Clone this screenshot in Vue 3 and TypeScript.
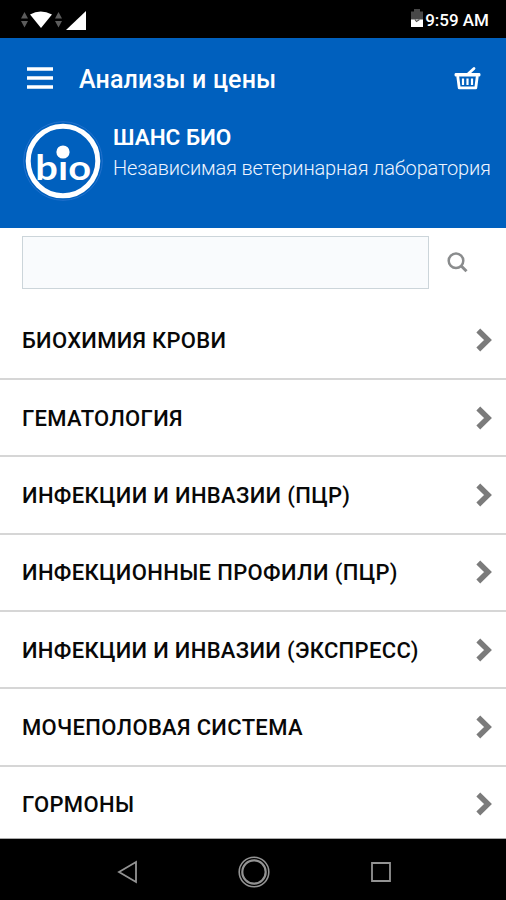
<script setup lang="ts">
interface Category {
  id: number
  title: string
  width: number
}

const categories: Category[] = [
  { id: 1, title: 'БИОХИМИЯ КРОВИ', width: 204 },
  { id: 2, title: 'ГЕМАТОЛОГИЯ', width: 160.5 },
  { id: 3, title: 'ИНФЕКЦИИ И ИНВАЗИИ (ПЦР)', width: 328 },
  { id: 4, title: 'ИНФЕКЦИОННЫЕ ПРОФИЛИ (ПЦР)', width: 375.5 },
  { id: 5, title: 'ИНФЕКЦИИ И ИНВАЗИИ (ЭКСПРЕСС)', width: 396.5 },
  { id: 6, title: 'МОЧЕПОЛОВАЯ СИСТЕМА', width: 280.5 },
  { id: 7, title: 'ГОРМОНЫ', width: 112 },
]
</script>

<template>
  <div class="screen">
    <div class="status">
      <svg class="signals" width="68" height="22" viewBox="0 0 68 22">
        <g fill="#5c5c5c">
          <path d="M1 9.5 4.500 3 8 9.500zM1 12 4.500 18.500 8 12z" />
          <path d="M35 9.500 38.500 3 42 9.500zM35 12 38.500 18.500 42 12z" />
        </g>
        <path d="M10 5.500Q20.500-.500 32 5.500L21 19z" fill="#fff" />
        <path d="M46 21 66 2V21z" fill="#fff" />
      </svg>
      <div class="status-right">
        <svg width="12" height="18" viewBox="0 0 12 18">
          <path d="M0 2.500H3V0H9V2.500H12V11H0z" fill="#484848" />
          <path d="M0 10.500H12V18H0z" fill="#fff" />
          <path d="M4 10.500 5.500 12.500 8.500 10.500" fill="none" stroke="#555" stroke-width="1.200" />
        </svg>
        <span class="clock">9:59 AM</span>
      </div>
    </div>

    <header class="header">
      <div class="toolbar">
        <svg class="menu" width="26" height="22" viewBox="0 0 26 22">
          <path d="M0 2H26M0 11H26M0 20H26" stroke="#fff" stroke-width="3.600" />
        </svg>
        <h1 class="title">Анализы и цены</h1>
        <svg class="basket" width="27" height="24" viewBox="0 0 27 24">
          <path d="M14 8 20 2.500" stroke="#fff" stroke-width="2.800" stroke-linecap="round" />
          <path d="M1.500 7H25.500Q26.500 7 26.500 8.700T25.500 10.400H1.500Q.500 10.400.500 8.700T1.500 7z" fill="#fff" />
          <path d="M3.700 10 5.200 21.800H21.800L23.300 10" fill="none" stroke="#fff" stroke-width="2.800" stroke-linejoin="round" />
          <path d="M9 12.500V19M13.500 12.500V19M18 12.500V19" stroke="#fff" stroke-width="2.200" />
        </svg>
      </div>
      <div class="brand">
        <svg class="logo" width="80" height="80" viewBox="0 0 80 80">
          <circle cx="40" cy="40" r="39.300" fill="none" stroke="#2371cc" stroke-width="1" />
          <circle cx="40" cy="40" r="34.800" fill="none" stroke="#fff" stroke-width="5" />
          <g class="logo-text" transform="translate(40 58.500) scale(1.17 1)">
            <text x="-14 0 14.300" y="0">bıo</text>
          </g>
          <circle cx="40" cy="31" r="6.600" fill="#fff" />
        </svg>
        <div class="brand-text">
          <div class="brand-name">ШАНС БИО</div>
          <div class="brand-sub">Независимая ветеринарная лаборатория</div>
        </div>
      </div>
    </header>

    <main class="content">
      <div class="search">
        <input class="search-input" type="text" />
        <svg width="22" height="22" viewBox="0 0 22 22" fill="none" stroke="#8a8c8d">
          <circle cx="9" cy="8.800" r="7.300" stroke-width="2.500" />
          <path d="M14 13.800 19.500 19.300" stroke-width="3" />
        </svg>
      </div>
      <ul class="list">
        <li v-for="item in categories" :key="item.id" class="row">
          <svg class="row-title" width="440" height="30">
            <text x="0" y="23" :textLength="item.width">{{ item.title }}</text>
          </svg>
          <svg width="16" height="24" viewBox="0 0 16 24">
            <path d="M2.300 2.500 12 12 2.300 21.500" fill="none" stroke="#7b7b7b" stroke-width="5.500" />
          </svg>
        </li>
      </ul>
    </main>

    <nav class="nav">
      <svg width="506" height="61" viewBox="0 0 506 61" fill="none" stroke="#939393" stroke-width="1.800">
        <path d="M119 33 136 23V43z" />
        <circle cx="254" cy="33" r="14.800" stroke-width="1.600" />
        <circle cx="254" cy="33" r="11.700" stroke-width="2.200" />
        <path d="M372 24H390V42H372z" />
      </svg>
    </nav>
  </div>
</template>

<style>
body {
  margin: 0;
}
</style>

<style scoped>
.screen {
  display: flex;
  flex-direction: column;
  width: 506px;
  height: 900px;
  overflow: hidden;
  background: #fff;
  font-family: Roboto, 'Liberation Sans', sans-serif;
}
svg {
  display: block;
  flex: none;
}
.status {
  box-sizing: border-box;
  display: flex;
  flex: none;
  justify-content: space-between;
  height: 38px;
  padding: 9px 17px 0 20px;
  background: #000;
}
.status-right {
  display: flex;
  gap: 2px;
}
.clock {
  color: #fff;
  font-size: 17px;
  font-weight: 500;
  line-height: 22px;
}
.header {
  flex: none;
  height: 190px;
  background: #0060be;
  color: #fff;
}
.toolbar {
  box-sizing: border-box;
  display: flex;
  align-items: center;
  height: 80px;
  padding: 0 25px 0 27px;
}
.title {
  flex: 1;
  margin: 4px 0 0 26px;
  font-size: 25px;
  font-weight: 500;
  letter-spacing: 0.16px;
  line-height: 30px;
  white-space: nowrap;
}
.brand {
  display: flex;
  padding: 3px 0 0 23px;
}
.logo-text {
  fill: #fff;
  font-family: Lato, sans-serif;
  font-size: 34px;
  font-weight: 700;
  text-anchor: middle;
}
.brand-text {
  margin-left: 10px;
  white-space: nowrap;
}
.brand-name {
  margin-top: 2px;
  font-size: 22.5px;
  font-weight: 600;
  line-height: 28px;
}
.brand-sub {
  margin-top: 4px;
  color: #eef4ff;
  font-size: 20px;
  font-weight: 300;
  letter-spacing: -0.16px;
  line-height: 26px;
}
.content {
  box-sizing: border-box;
  flex: none;
  height: 611px;
  overflow: hidden;
  border-bottom: 1px solid #aaa;
}
.search {
  display: flex;
  align-items: center;
  gap: 18px;
  height: 53px;
  padding: 8px 0 13.600px 22px;
}
.search-input {
  box-sizing: border-box;
  width: 407px;
  height: 53px;
  border: 1px solid #ccd5da;
  border-radius: 0;
  background: #f9fbfd;
}
.list {
  margin: 0;
  padding: 0;
  list-style: none;
}
.row {
  box-sizing: border-box;
  display: flex;
  align-items: center;
  justify-content: space-between;
  height: 77.35px;
  padding: 0 14px 0 22px;
  border-bottom: 2px solid #d6d6d6;
}
.row-title {
  font-size: 22px;
  font-weight: 500;
  fill: #080808;
}
.nav {
  flex: none;
  height: 61px;
  background: #000;
}
</style>
